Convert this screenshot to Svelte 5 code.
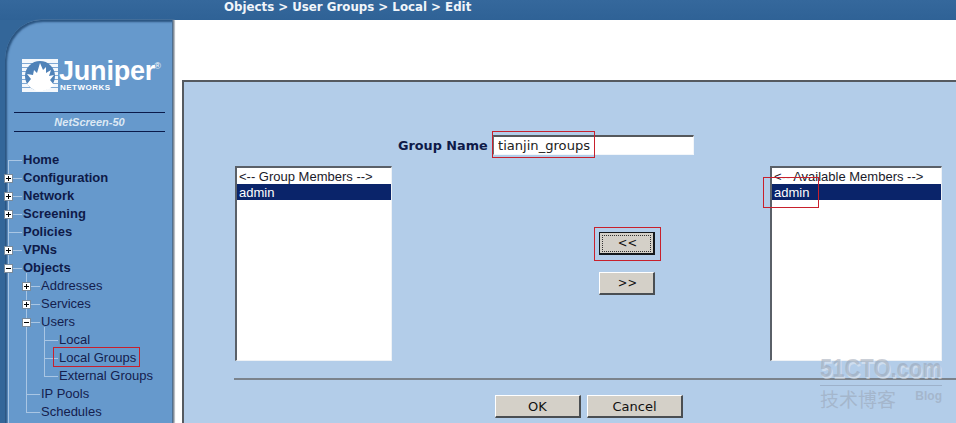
<script>
  const topItems = [
    { label: 'Home' },
    { label: 'Configuration', box: 'plus' },
    { label: 'Network', box: 'plus' },
    { label: 'Screening', box: 'plus' },
    { label: 'Policies' },
    { label: 'VPNs', box: 'plus' }
  ];
  const annotations = [
    { cls: 'a-input' },
    { cls: 'a-admin' },
    { cls: 'a-btn' },
    { cls: 'a-local' }
  ];
</script>

<div class="page">
  <header class="topbar">Objects &gt; User Groups &gt; Local &gt; Edit</header>

  <div class="main">
    <aside class="side">
      <div class="logo">
        <svg class="mark" width="36" height="33" viewBox="0 0 36 33" aria-hidden="true">
          <rect width="36" height="33" fill="#f4f8fc" />
          <g fill="#7fa8d4">
            <rect y="4" width="36" height="1" /><rect y="8" width="36" height="1" />
            <rect y="12" width="36" height="1" /><rect y="16" width="36" height="1" />
            <rect y="20" width="36" height="1" /><rect y="24" width="36" height="1" />
            <rect y="28" width="36" height="1" />
          </g>
          <circle cx="18" cy="17" r="15" fill="#4f82b8" />
          <path d="M5 25 L9 20 L5 15 L11 16 L12 11 L15 14 L18 4 L21 11 L24 8 L24 14 L29 11 L27 17 L32 16 L28 21 L32 26 L27 30 L21 32 L14 32 L9 29 Z" fill="#fff" />
        </svg>
        <div class="wordmark">
          <span class="juniper">Juniper<sup>®</sup></span>
          <span class="networks">NETWORKS</span>
        </div>
      </div>

      <div class="model">NetScreen-50</div>

      <ul class="tree root">
        {#each topItems as item}
          <li class="strong">
            {#if item.box}<span class="box {item.box}"></span>{/if}
            {item.label}
          </li>
        {/each}
        <li class="strong"><span class="box"></span>Objects</li>
        <ul class="tree sub">
          <li><span class="box plus"></span>Addresses</li>
          <li><span class="box plus"></span>Services</li>
          <li><span class="box"></span>Users</li>
          <ul class="tree sub leaf">
            <li>Local</li>
            <li>Local Groups</li>
            <li>External Groups</li>
          </ul>
          <li>IP Pools</li>
          <li>Schedules</li>
        </ul>
      </ul>
    </aside>

    <section class="content">
      <div class="panel">
        <div class="name-row">
          <label class="name-label" for="gname">Group Name</label>
          <input id="gname" class="name-input" value="tianjin_groups" />
        </div>

        <div class="lists">
          <div class="list">
            <div class="opt">&lt;-- Group Members --&gt;</div>
            <div class="opt sel">admin</div>
          </div>
          <div></div>
          <div class="moves">
            <button class="btn move focus"><span>&lt;&lt;</span></button>
            <button class="btn move"><span>&gt;&gt;</span></button>
          </div>
          <div></div>
          <div class="list">
            <div class="opt">&lt;-- Available Members --&gt;</div>
            <div class="opt sel">admin</div>
          </div>
        </div>

        <div class="rule"></div>

        <div class="actions">
          <button class="btn ok">OK</button>
          <button class="btn cancel">Cancel</button>
        </div>
      </div>
    </section>
  </div>

  {#each annotations as a}
    <div class="note {a.cls}"></div>
  {/each}

  <div class="mark-wm">
    <div class="wm-main"><span>51CTO.com</span></div>
    <div class="wm-sub"><span class="wm-cn">技术博客</span><span class="wm-blog">Blog</span></div>
  </div>
</div>

<style>
  :global(body) { margin: 0; background: #fff; }

  .page {
    position: relative;
    width: 956px;
    height: 423px;
    overflow: hidden;
    display: flex;
    flex-direction: column;
    background: #336699;
    font-family: "Liberation Sans", Arial, sans-serif;
  }

  .topbar {
    height: 20px;
    flex: none;
    box-sizing: border-box;
    padding-left: 224px;
    font: bold 11.8px/15px "DejaVu Sans", Verdana, sans-serif;
    color: #f0f5fa;
    background: linear-gradient(#35689c, #2f6296);
  }

  .main { flex: 1; display: flex; min-height: 0; }

  .side {
    width: 168px;
    margin-left: 5px;
    flex: none;
    box-sizing: border-box;
    background: #6699cc;
    border-top-left-radius: 36px 40px;
    border-right: 1px solid #4f6f90;
    box-shadow: inset 2px 2px 2px #2a5480, 1px 0 1px #7d8894, 2px 0 1px #b8bec4;
    padding-top: 38px;
    position: relative;
  }

  .logo { display: flex; margin-left: 17px; height: 33px; gap: 1px; color: #fff; }
  .mark { flex: none; margin-top: 1px; }
  .wordmark { position: relative; width: 100px; }
  .juniper {
    display: block;
    font: bold 27px/27px "Liberation Sans", Arial, sans-serif;
    letter-spacing: -0.2px;
    white-space: nowrap;
  }
  .juniper sup { font-size: 9px; font-weight: normal; vertical-align: 11px; line-height: 0; margin-left: -1px; }
  .networks {
    position: absolute;
    left: 1px;
    top: 25px;
    font: bold 8px/9px "Liberation Sans", Arial, sans-serif;
    letter-spacing: 0.5px;
  }

  .model {
    margin: 21px 7px 0 9px;
    height: 18px;
    border-top: 1px solid #0a1a4a;
    border-bottom: 1px solid #0a1a4a;
    text-align: center;
    font: italic bold 11px/18px "Liberation Sans", Arial, sans-serif;
    color: #dce8f4;
  }

  .tree { list-style: none; margin: 0; padding: 0; position: relative; }
  .root { margin: 19px 0 0 18px; }
  .root::before {
    content: "";
    position: absolute;
    left: -15px;
    top: 9px;
    bottom: -40px;
    width: 1px;
    background: #a9c6e4;
  }
  .sub { margin-left: 18px; }
  .sub::before {
    content: "";
    position: absolute;
    left: -15px;
    top: -4px;
    bottom: 9px;
    width: 1px;
    background: #a9c6e4;
  }
  .tree li {
    position: relative;
    height: 18px;
    font-size: 13px;
    line-height: 18px;
    color: #14204e;
    white-space: nowrap;
  }
  .tree li::before {
    content: "";
    position: absolute;
    left: -15px;
    top: 9px;
    width: 14px;
    height: 1px;
    background: #a9c6e4;
  }
  .tree li.strong { font-weight: bold; color: #0e1a48; }

  .box {
    position: absolute;
    left: -19px;
    top: 5px;
    width: 9px;
    height: 9px;
    box-sizing: border-box;
    border: 1px solid #7a8a9a;
    background:
      linear-gradient(#000, #000) center / 5px 1px no-repeat,
      #fff;
    z-index: 1;
  }
  .box.plus {
    background:
      linear-gradient(#000, #000) center / 5px 1px no-repeat,
      linear-gradient(#000, #000) center / 1px 5px no-repeat,
      #fff;
  }

  .content { flex: 1; background: #fff; padding: 60px 0 0 9px; min-width: 0; box-shadow: inset 1px 0 0 #d6d8da; }

  .panel {
    box-sizing: border-box;
    height: 343px;
    border-top: 2px solid #555a60;
    border-left: 2px solid #555a60;
    background: #b3cde9;
    padding: 53px 0 0 51px;
  }

  .name-row { display: flex; align-items: flex-start; height: 20px; padding-left: 163px; }
  .name-label {
    width: 95px;
    flex: none;
    font: bold 12.8px/21px "DejaVu Sans", Verdana, sans-serif;
    color: #0e1a48;
  }
  .name-input {
    width: 201px;
    height: 20px;
    box-sizing: border-box;
    padding: 0 0 0 4px;
    border-style: solid;
    border-width: 2px 1px 1px 1px;
    border-color: #55585c #f2f6fa #f2f6fa #6a6e72;
    background: #fff;
    font: 13.1px/17px "DejaVu Sans", Verdana, sans-serif;
    color: #222;
    outline: none;
  }

  .lists {
    margin-top: 11px;
    display: grid;
    grid-template-columns: 157px 207px 56px 115px 172px;
    height: 195px;
  }
  .list {
    box-sizing: border-box;
    background: #fff;
    border-style: solid;
    border-width: 2px 1px 1px 2px;
    border-color: #5a6068 #eef2f6 #eef2f6 #5a6068;
    font-size: 13px;
    color: #1a1a2a;
  }
  .opt { height: 16px; line-height: 17px; padding-left: 2px; white-space: nowrap; }
  .sel { background: #0a246a; color: #fff; }

  .moves { display: flex; flex-direction: column; gap: 17px; padding-top: 66px; }

  .btn {
    box-sizing: border-box;
    margin: 0;
    padding: 0;
    background: #d4d0c8;
    border-style: solid;
    border-width: 1px 2px 2px 1px;
    border-color: #fff #4a4e52 #4a4e52 #fff;
    color: #111;
    font: 13px/1 "DejaVu Sans", Verdana, sans-serif;
  }
  .move { width: 56px; height: 23px; font-size: 11.5px; padding: 1px 0 0 2px; }
  .focus {
    border: 1px solid #14181c;
    border-width: 1px 2px 2px 1px;
    padding: 2px;
  }
  .focus span {
    display: block;
    height: 15px;
    line-height: 15px;
    padding-left: 2px;
    border: 1px dotted #333;
  }

  .rule { height: 2px; margin: 17px 0 0 -1px; background: #7b838c; }

  .actions { display: flex; gap: 6px; padding: 15px 0 0 260px; }
  .ok { width: 86px; height: 23px; }
  .cancel { width: 96px; height: 23px; }

  .note { position: absolute; box-sizing: border-box; border: 1px solid #c8202c; }
  .a-input { left: 492px; top: 131px; width: 103px; height: 27px; }
  .a-admin { left: 763px; top: 177px; width: 56px; height: 31px; }
  .a-btn { left: 594px; top: 227px; width: 67px; height: 34px; }
  .a-local { left: 53px; top: 347px; width: 87px; height: 20px; }

  .mark-wm {
    position: absolute;
    left: 820px;
    top: 356px;
    width: 122px;
    color: rgba(150, 160, 175, 0.5);
  }
  .wm-main {
    height: 29px;
    border-bottom: 1px solid rgba(130, 145, 165, 0.45);
  }
  .wm-main span {
    display: block;
    font: bold 22px/26px "Liberation Sans", Arial, sans-serif;
    white-space: nowrap;
    transform: scaleY(1.2);
    transform-origin: 0 50%;
    text-shadow: 1px 1px 0 rgba(235, 240, 245, 0.5);
  }
  .wm-sub { display: flex; justify-content: space-between; margin-top: 2px; }
  .wm-cn { font: 19px/22px "Noto Sans CJK SC", sans-serif; white-space: nowrap; }
  .wm-blog { font: bold 12px/16px "Liberation Sans", Arial, sans-serif; }
</style>
